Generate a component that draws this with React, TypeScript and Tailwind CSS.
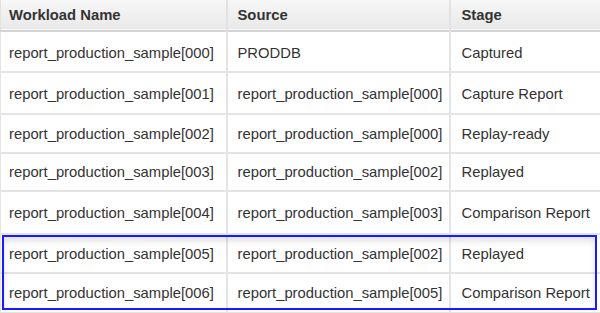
import React from 'react';

const rows: { name: string; source: string; stage: string; h: string; pt: string }[] = [
  { name: 'report_production_sample[000]', source: 'PRODDB', stage: 'Captured', h: 'h-[41px]', pt: 'pt-[4px]' },
  { name: 'report_production_sample[001]', source: 'report_production_sample[000]', stage: 'Capture Report', h: 'h-[42px]', pt: 'pt-[2px]' },
  { name: 'report_production_sample[002]', source: 'report_production_sample[000]', stage: 'Replay-ready', h: 'h-[39px]', pt: 'pt-[1px]' },
  { name: 'report_production_sample[003]', source: 'report_production_sample[002]', stage: 'Replayed', h: 'h-[38px]', pt: 'pt-0' },
  { name: 'report_production_sample[004]', source: 'report_production_sample[003]', stage: 'Comparison Report', h: 'h-[43px]', pt: 'pt-[1px]' },
  { name: 'report_production_sample[005]', source: 'report_production_sample[002]', stage: 'Replayed', h: 'h-[39px]', pt: 'pt-[1px]' },
  { name: 'report_production_sample[006]', source: 'report_production_sample[005]', stage: 'Comparison Report', h: 'h-[40px]', pt: 'pt-[1px]' },
];

export default function App() {
  return (
    <div className="relative w-[600px] h-[313px] overflow-hidden bg-white font-['Liberation_Sans',Arial,sans-serif] text-[14.8px] text-[#333]">
      <table className="w-[602px] border-collapse table-fixed">
        <colgroup>
          <col className="w-[226px]" />
          <col className="w-[223px]" />
          <col />
        </colgroup>
        <thead>
          <tr className="h-[31px] bg-gradient-to-b from-[#f7f7f7] to-[#e9e9e9] border-b-2 border-[#d4d4d4]">
            <th className="border-l border-r-2 border-[#e2e2e2] pl-[8px] text-left font-bold">Workload Name</th>
            <th className="border-r-2 border-[#e2e2e2] pl-[10px] text-left font-bold">Source</th>
            <th className="pl-[11px] text-left font-bold">Stage</th>
          </tr>
        </thead>
        <tbody>
          {rows.map((r) => (
            <tr key={r.name} className={`${r.h} border-b-2 border-[#e4e4e4]`}>
              <td className={`border-l border-r-2 border-[#e4e4e4] pl-[8px] ${r.pt} whitespace-nowrap`}>{r.name}</td>
              <td className={`border-r-2 border-[#e4e4e4] pl-[10px] ${r.pt} whitespace-nowrap`}>{r.source}</td>
              <td className={`pl-[11px] ${r.pt} whitespace-nowrap`}>{r.stage}</td>
            </tr>
          ))}
        </tbody>
      </table>
      <div className="absolute left-[2px] top-[235px] w-[595px] h-[75px] border-2 border-[#1a1aff] shadow-[inset_0_4px_6px_rgba(0,0,0,0.12)] pointer-events-none" />
    </div>
  );
}
